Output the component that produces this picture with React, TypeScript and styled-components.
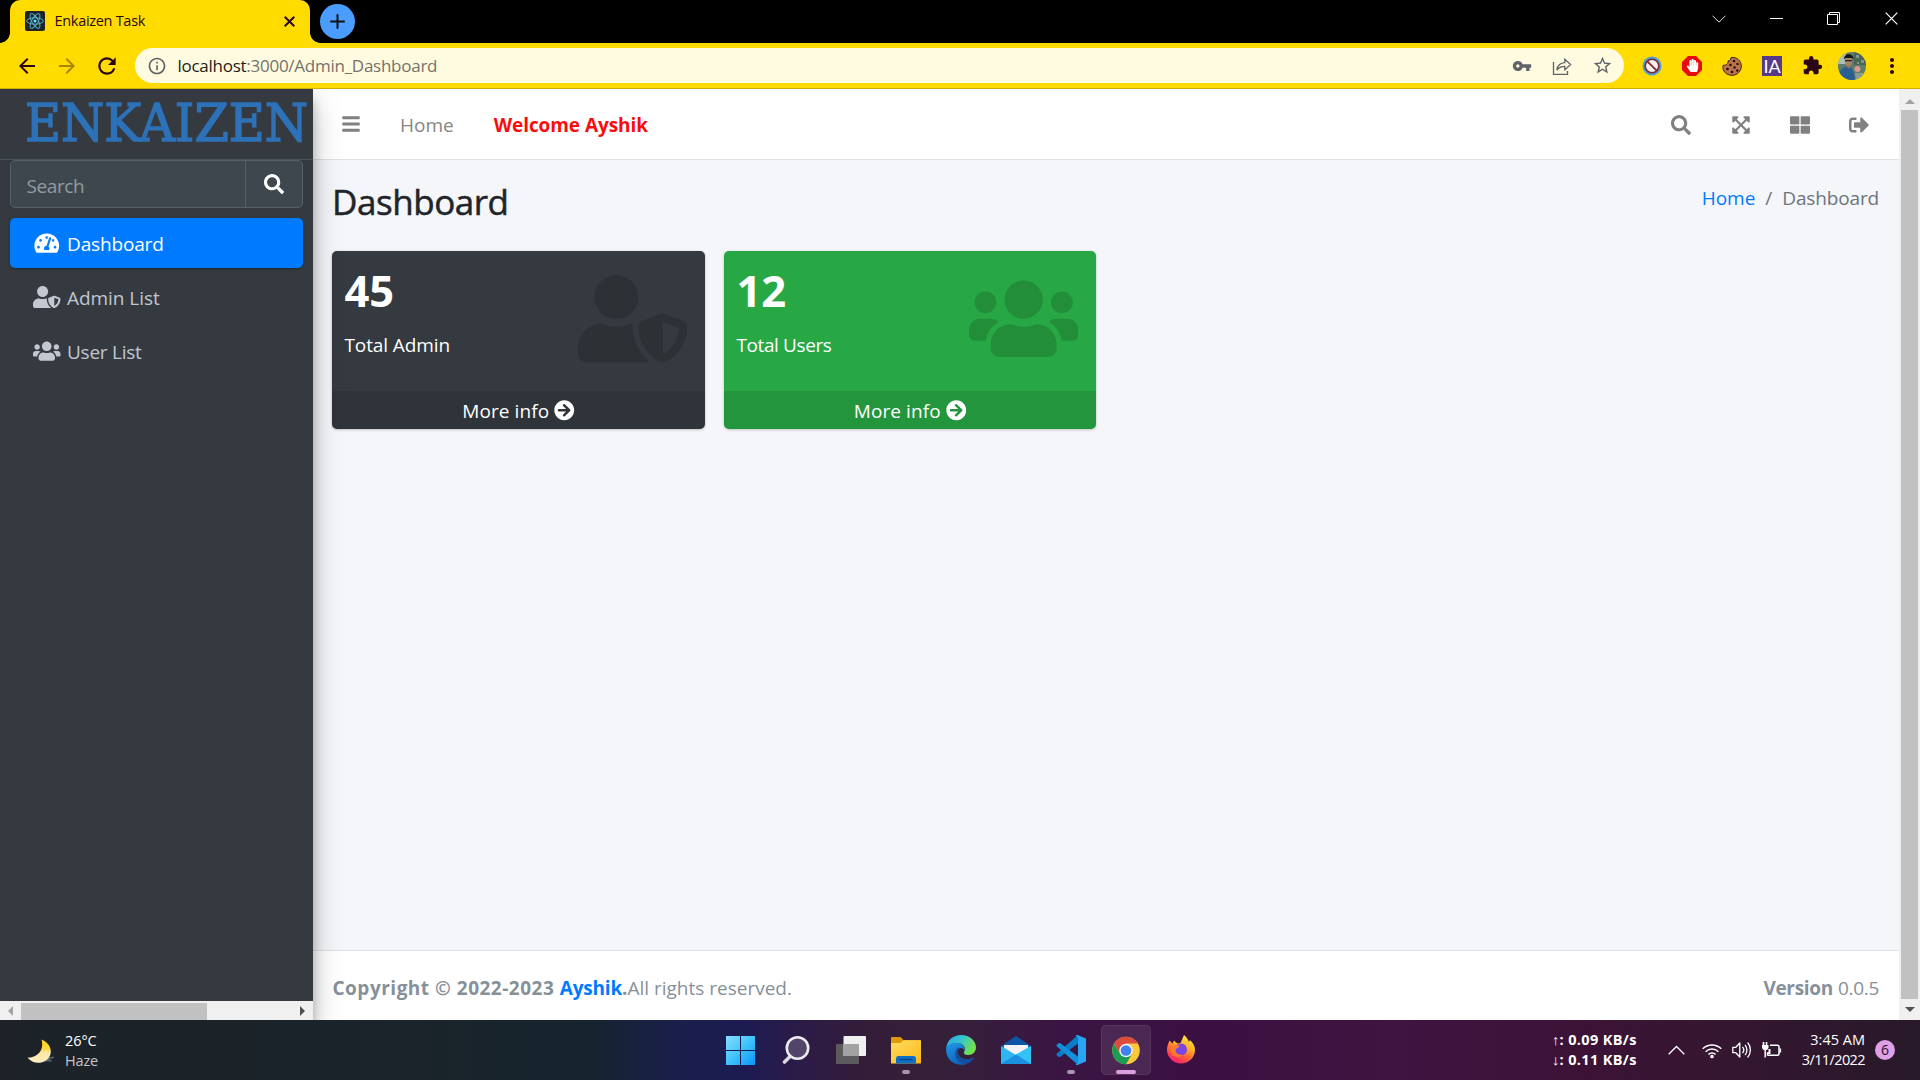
import React from 'react';
import styled, { createGlobalStyle } from 'styled-components';
import {
  FaBars, FaSearch, FaExpandArrowsAlt, FaThLarge, FaSignOutAlt, FaTachometerAlt,
  FaUserShield, FaUsers, FaArrowCircleRight, FaHandPaper,
} from 'react-icons/fa';
import {
  MdArrowBack, MdArrowForward, MdRefresh, MdInfoOutline, MdVpnKey, MdStarBorder,
  MdExtension, MdMoreVert,
} from 'react-icons/md';

const GlobalStyle = createGlobalStyle`
  * { box-sizing: border-box; }
  html, body { margin: 0; padding: 0; overflow: hidden; }
  body {
    font-family: "Open Sans", "Noto Sans", sans-serif;
    font-size: 19px;
    color: #212529;
  }
  svg { display: block; flex: none; }
`;

const Label = styled.span<{ $ls?: number }>`
  letter-spacing: ${p => p.$ls ?? 0}px;
  white-space: pre;
`;

const Screen = styled.div`
  width: 1920px;
  height: 1080px;
  display: flex;
  flex-direction: column;
  overflow: hidden;
`;

/* ---------- browser chrome ---------- */
const TabStrip = styled.div`
  height: 43px;
  background: #000;
  display: flex;
  align-items: flex-start;
  padding-left: 10px;
`;

const Tab = styled.div`
  position: relative;
  width: 300px;
  height: 43px;
  background: #ffdb00;
  border-radius: 10px 10px 0 0;
  display: flex;
  align-items: center;
  padding: 0 15px 1px 15px;
  font-size: 14.5px;
  color: #2b0614;
  &::before, &::after {
    content: "";
    position: absolute;
    bottom: 0;
    width: 10px;
    height: 10px;
  }
  &::before { left: -10px; background: radial-gradient(circle at 0 0, transparent 9.5px, #ffdb00 10px); }
  &::after { right: -10px; background: radial-gradient(circle at 100% 0, transparent 9.5px, #ffdb00 10px); }
`;

const TabTitle = styled(Label)`
  flex: 1;
  margin: -1px 0 0 9.5px;
`;

const NewTab = styled.div`
  width: 35px;
  height: 35px;
  border-radius: 50%;
  background: #4a9dff;
  margin: 4px 0 0 10px;
  display: grid;
  place-items: center;
`;

const WindowControls = styled.div`
  display: flex;
  margin-left: auto;
  height: 37px;
`;

const WindowControl = styled.div`
  width: 57.5px;
  display: grid;
  place-items: center;
`;

const Toolbar = styled.div`
  height: 46px;
  background: #ffdb00;
  border-bottom: 1px solid #cfae05;
  display: flex;
  align-items: center;
  padding: 0 8px 0 7.5px;
  color: #2b0614;
`;

const ToolSlot = styled.div<{ $faded?: boolean }>`
  width: 40px;
  height: 40px;
  display: grid;
  place-items: center;
  opacity: ${p => (p.$faded ? 0.4 : 1)};
`;

const AddressBar = styled.div`
  width: 1490px;
  height: 35px;
  margin: 0 8px 0 7.5px;
  border-radius: 18px;
  background: #fffbe0;
  display: flex;
  align-items: center;
  padding: 0 2px 0 12.5px;
  color: #5f6368;
  font-size: 17px;
`;

const Url = styled(Label)`
  flex: 1;
  margin-left: 10px;
  color: #75716a;
  b { font-weight: 400; color: #1d1b16; }
`;

const IaBadge = styled.span`
  width: 20px;
  height: 20px;
  background: #56398a;
  color: #fff;
  font-family: Lato, sans-serif;
  font-size: 18px;
  line-height: 20px;
  text-align: center;
`;

/* ---------- page ---------- */
const Page = styled.div`
  height: 931px;
  display: flex;
  overflow: hidden;
  background: #f4f6f9;
`;

const Sidebar = styled.aside`
  width: 313px;
  background: #343a40;
  z-index: 2;
  display: flex;
  flex-direction: column;
  box-shadow: 0 14px 28px rgba(0, 0, 0, 0.25), 0 10px 10px rgba(0, 0, 0, 0.22);
`;

const Brand = styled.div`
  height: 71px;
  border-bottom: 1px solid #4b545c;
  padding: 0 0 2px 24.5px;
  display: flex;
  align-items: center;
`;

const BrandName = styled.span`
  font-family: "DejaVu Serif", serif;
  font-size: 52px;
  line-height: 64px;
  color: #2d72b8;
  -webkit-text-stroke: 1.5px #2d72b8;
  white-space: nowrap;
  transform: scaleX(0.95);
  transform-origin: 0 50%;
`;

const SearchBox = styled.div`
  margin: 0 10px;
  height: 48px;
  border: 1px solid #56606a;
  border-radius: 5px;
  background: #3f474e;
  display: flex;
  align-items: stretch;
`;

const SearchInput = styled.div`
  flex: 1;
  display: flex;
  align-items: center;
  padding: 3px 0 0 15.5px;
  color: #939ba2;
`;

const SearchButton = styled.div`
  width: 57px;
  border-left: 1px solid #56606a;
  display: grid;
  place-items: center;
  color: #fff;
`;

const Menu = styled.nav`
  flex: 1;
  display: flex;
  flex-direction: column;
  gap: 4px;
  padding: 10px;
`;

const MenuItem = styled.a<{ $active?: boolean }>`
  height: 50px;
  border-radius: 5px;
  display: flex;
  align-items: center;
  padding-left: 20px;
  color: ${p => (p.$active ? '#fff' : '#c2c7d0')};
  background: ${p => (p.$active ? '#007bff' : 'transparent')};
  box-shadow: ${p => (p.$active ? '0 1px 3px rgba(0,0,0,.12), 0 1px 2px rgba(0,0,0,.24)' : 'none')};
`;

const MenuIcon = styled.span`
  width: 34px;
  margin-right: 3px;
  display: flex;
  justify-content: center;
  svg { width: 27.5px; height: 22px; }
`;

const MenuText = styled(Label)`
  padding-top: 2px;
`;

const HScroll = styled.div`
  height: 19px;
  background: #f0f0f0;
  display: flex;
  align-items: center;
  padding: 0 8px;
`;

const HThumb = styled.div`
  width: 186px;
  height: 17px;
  margin: 2px auto 0 8px;
  background: #c1c1c1;
`;

const Main = styled.main`
  flex: 1;
  display: flex;
  flex-direction: column;
`;

const Navbar = styled.header`
  height: 71px;
  background: #fff;
  border-bottom: 1px solid #dee2e6;
  display: flex;
  align-items: center;
  padding: 0 30px 0 28px;
  color: #808080;
`;

const NavLink = styled(Label)<{ $left: number; $bold?: boolean }>`
  margin: 2px 0 0 ${p => p.$left}px;
  font-weight: ${p => (p.$bold ? 700 : 400)};
  color: ${p => (p.$bold ? '#f80d0d' : '#868686')};
`;

const NavTools = styled.div`
  margin: 1px 0 0 auto;
  display: grid;
  grid-template-columns: repeat(4, 20px);
  justify-items: center;
  align-items: center;
  gap: 39.2px;
`;

const Content = styled.section`
  flex: 1;
  padding: 0 20px 0 19px;
`;

const ContentHeader = styled.div`
  height: 91px;
  display: flex;
  justify-content: space-between;
  align-items: flex-start;
`;

const Title = styled.h1`
  margin: 18px 0 0;
  font-size: 35px;
  line-height: 48px;
  font-weight: 400;
  letter-spacing: -0.45px;
  -webkit-text-stroke: 0.5px #212529;
`;

const Breadcrumb = styled.div`
  margin-top: 23px;
  line-height: 30px;
  display: flex;
  gap: 10px;
  color: #6c757d;
  a { color: #007bff; }
`;

const Cards = styled.div`
  display: grid;
  grid-template-columns: 373px 372px;
  gap: 19px;
`;

const Card = styled.article<{ $bg: string }>`
  height: 178px;
  border-radius: 5px;
  overflow: hidden;
  background: ${p => p.$bg};
  color: #fff;
  display: flex;
  flex-direction: column;
  box-shadow: 0 0 1px rgba(0, 0, 0, 0.125), 0 1px 3px rgba(0, 0, 0, 0.2);
`;

const CardBody = styled.div`
  flex: 1;
  display: flex;
  justify-content: space-between;
  padding: 0 18px 0 12.5px;
`;

const CardIcon = styled.div`
  margin-top: 24px;
  color: rgba(0, 0, 0, 0.15);
  svg { width: 109.4px; height: 87.5px; }
`;

const Count = styled.div`
  margin-top: 15px;
  font-size: 43.5px;
  line-height: 50px;
  font-weight: 700;
`;

const Caption = styled.div`
  margin-top: 14px;
  line-height: 30px;
`;

const CardFooter = styled.div`
  height: 38px;
  background: rgba(0, 0, 0, 0.1);
  display: flex;
  align-items: center;
  justify-content: center;
  gap: 5px;
  padding-top: 1px;
`;

const Footer = styled.footer`
  height: 70px;
  background: #fff;
  border-top: 1px solid #dee2e6;
  display: flex;
  align-items: center;
  padding: 5px 20px 0 19.5px;
  color: #869099;
  b { font-weight: 700; }
  a { color: #007bff; }
`;

const Version = styled.div`
  margin-left: auto;
`;

const VScroll = styled.div`
  width: 21px;
  background: #f0f0f0;
  display: flex;
  flex-direction: column;
  align-items: center;
`;

const VThumb = styled.div`
  width: 17px;
  flex: 1;
  margin: 6px 0 8px;
  background: #c1c1c1;
`;

/* ---------- taskbar ---------- */
const Taskbar = styled.footer`
  height: 60px;
  display: grid;
  grid-template-columns: 713px 495px 1fr;
  color: #fff;
  font-size: 14.5px;
  line-height: 20px;
  background: linear-gradient(90deg, #1c2228 0, #1a242a 420px, #16242f 590px, #1a1f4c 680px,
    #1d1b52 745px, #2b1b47 800px, #341d38 870px, #35203a 950px, #3a1543 1060px, #3a1042 1200px,
    #3e1440 1400px, #3d1238 1560px, #361631 1700px, #28192a 1920px);
`;

const Weather = styled.div`
  display: flex;
  align-items: center;
  padding: 1px 0 0 26px;
  gap: 9px;
`;

const Lines = styled.div<{ $right?: boolean; $bold?: boolean }>`
  display: flex;
  flex-direction: column;
  align-items: ${p => (p.$right ? 'flex-end' : 'flex-start')};
  font-weight: ${p => (p.$bold ? 700 : 400)};
`;

const Dim = styled(Label)`
  color: #c3c7ca;
`;

const Apps = styled.div`
  display: grid;
  grid-template-columns: repeat(9, 55px);
  justify-items: center;
  align-items: center;
`;

const AppTile = styled.div<{ $active?: boolean }>`
  width: 50px;
  height: 50px;
  border-radius: 5px;
  border: 1px solid ${p => (p.$active ? 'rgba(255,255,255,.07)' : 'transparent')};
  background: ${p => (p.$active ? 'rgba(255,255,255,.09)' : 'transparent')};
  display: flex;
  flex-direction: column;
  align-items: center;
  padding-top: 9px;
`;

const Running = styled.span<{ $active?: boolean }>`
  width: ${p => (p.$active ? 20 : 8)}px;
  height: 4px;
  margin-top: 5px;
  border-radius: 2px;
  background: ${p => (p.$active ? '#dc9fe4' : '#a596ab')};
`;

const Tray = styled.div`
  display: flex;
  align-items: center;
  justify-content: flex-end;
  padding-right: 25px;
`;

const TrayIcons = styled.div`
  display: flex;
  align-items: center;
  gap: 10px;
  margin: 0 20px 0 31px;
`;

const ChevronSlot = styled.span`
  margin-right: 7px;
`;

const Badge = styled.span`
  width: 20px;
  height: 20px;
  margin-left: 10px;
  border-radius: 50%;
  background: #dfa0e8;
  color: #26142a;
  font-size: 14px;
  line-height: 20px;
  text-align: center;
`;

/* ---------- drawings ---------- */
const ReactIcon = () => (
  <svg width="20" height="20" viewBox="0 0 20 20">
    <rect width="20" height="20" rx="2" fill="#20232a" />
    <g fill="none" stroke="#61dafb" strokeWidth="0.9" opacity=".85">
      <ellipse cx="10" cy="10" rx="8.3" ry="3.2" />
      <ellipse cx="10" cy="10" rx="8.3" ry="3.2" transform="rotate(60 10 10)" />
      <ellipse cx="10" cy="10" rx="8.3" ry="3.2" transform="rotate(120 10 10)" />
    </g>
    <circle cx="10" cy="10" r="1.6" fill="#61dafb" />
  </svg>
);

const Cross = ({ size, width, color }: { size: number; width: number; color: string }) => (
  <svg width={size} height={size} viewBox={`0 0 ${size} ${size}`} stroke={color} strokeWidth={width}>
    <path d={`M.7.7L${size - 0.7} ${size - 0.7}M${size - 0.7}.7L.7 ${size - 0.7}`} />
  </svg>
);

const Plus = () => (
  <svg width="15" height="15" viewBox="0 0 15 15" stroke="#111" strokeWidth="2" strokeLinecap="round">
    <path d="M7.5 1v13M1 7.5h13" />
  </svg>
);

const ShareIcon = () => (
  <svg width="20" height="20" viewBox="0 0 20 20" fill="none" stroke="#5f6368" strokeWidth="1.3">
    <path d="M1.500 6v12.300h14V15" />
    <path d="M4.800 14.200c.6-4.600 3.200-7.200 8-7.500V3.200L18.600 8.600l-5.800 5.300v-3.500c-3.600 0-6 1-8 3.800z" />
  </svg>
);

const BlockIcon = () => (
  <svg width="20" height="20" viewBox="0 0 20 20">
    <circle cx="10" cy="10" r="9.500" fill="#4a9fdc" />
    <circle cx="10" cy="10" r="6.800" fill="#f3efef" stroke="#84242e" strokeWidth="1.600" />
    <path d="M5.300 5.300l9.400 9.400" stroke="#84242e" strokeWidth="1.800" />
  </svg>
);

const HandIcon = () => (
  <svg width="20" height="20" viewBox="0 0 20 20">
    <path d="M6 0h8l6 6v8l-6 6H6l-6-6V6z" fill="#e90b0b" />
    <g color="#fff"><FaHandPaper x="4" y="3" size={13} /></g>
  </svg>
);

const CookieIcon = () => (
  <svg width="20" height="20" viewBox="0 0 20 20">
    <path d="M9 1.500c0 2.500-1 3.500-3 3.500.3 2.500-1 4-5 4.500C0 15 4.500 19.300 10 19.300s9.300-4.300 9.300-9.300S15 .7 9 1.500z" fill="#bd744b" stroke="#3a211a" strokeWidth="1" />
    <g fill="#1e100c">
      <circle cx="12" cy="5" r="1.300" /><circle cx="8.500" cy="9" r="1.300" /><circle cx="15.500" cy="8" r="1.200" />
      <circle cx="12.500" cy="11.500" r="1.200" /><circle cx="5.500" cy="13" r="1.300" /><circle cx="10" cy="16" r="1.300" /><circle cx="15.300" cy="14.500" r="1.200" />
    </g>
  </svg>
);

const Avatar = () => (
  <svg width="28" height="28" viewBox="0 0 28 28">
    <defs><clipPath id="av"><circle cx="14" cy="14" r="14" /></clipPath></defs>
    <g clipPath="url(#av)">
      <rect width="28" height="28" fill="#5f7d6d" />
      <path d="M0 0h8v12H0z" fill="#a9bfb5" />
      <path d="M16 0h12v13H16z" fill="#4a6455" />
      <path d="M18 3h3v3h-3zM23 8h3v3h-3zM19 10h2v2h-2z" fill="#7e978a" />
      <path d="M1 20c3-4 6-6 9-6s6 4 7 14H0z" fill="#2b5f94" />
      <path d="M8.500 11h4v4l-2 1.500-2-1.500z" fill="#9b7860" />
      <ellipse cx="10.500" cy="9" rx="3.700" ry="4.500" fill="#a98468" />
      <path d="M6 7.500c-.5-7 10-7 9.500 0L14 6H7.500z" fill="#14181c" />
      <path d="M7 8.600h7" stroke="#222" strokeWidth="1.400" />
      <circle cx="19.500" cy="17" r="3" fill="#d99a90" />
      <path d="M17 21h9v7h-8z" fill="#8b9c94" />
    </g>
  </svg>
);

const Arrow = ({ d, color, w, h }: { d: string; color: string; w: number; h: number }) => (
  <svg width={w} height={h} viewBox={`0 0 ${w} ${h}`}><path d={d} fill={color} /></svg>
);

const Moon = () => (
  <svg width="30" height="26" viewBox="0 0 30 26">
    <defs><linearGradient id="mn" x1="0" y1="0" x2="0" y2="1">
      <stop offset="0" stopColor="#ffd21c" /><stop offset=".4" stopColor="#ffd93c" />
      <stop offset=".55" stopColor="#fbe6a0" /><stop offset="1" stopColor="#ffefc4" />
    </linearGradient></defs>
    <path d="M18 20l9-1.500 1.500 1.500-5 1 3 2.500H18z" fill="#59616e" />
    <path d="M15.500 1.500C22 4 26 10 24.500 16c-2.500 10-17 12-23 3.500C9 20 19 14 15.500 1.500z" fill="url(#mn)" />
  </svg>
);

const WindowsIcon = () => (
  <svg width="30" height="30" viewBox="0 0 30 30">
    <defs><linearGradient id="wn" gradientUnits="userSpaceOnUse" x1="0" y1="0" x2="30" y2="30">
      <stop offset="0" stopColor="#8be0ff" /><stop offset=".5" stopColor="#3fc4fb" /><stop offset="1" stopColor="#0a93fa" />
    </linearGradient></defs>
    <path d="M0 1h14v14H0zM15 1h14v14H15zM0 16h14v14H0zM15 16h14v14H15z" fill="url(#wn)" />
  </svg>
);

const TaskSearch = () => (
  <svg width="30" height="30" viewBox="0 0 30 30">
    <path d="M10 20.500L3.500 27" stroke="#d9d9dd" strokeWidth="3.600" strokeLinecap="round" />
    <circle cx="16.500" cy="13" r="10.700" fill="#52446b" stroke="#ececf0" strokeWidth="2.600" />
  </svg>
);

const TaskView = () => (
  <svg width="30" height="30" viewBox="0 0 30 30">
    <rect x="0" y="9" width="23" height="20" rx="1" fill="#5c5a5c" />
    <rect x="7.500" y="1" width="22.500" height="20" rx="1" fill="#f0f0f0" />
    <path d="M7.500 9H22q1 0 1 1v11H7.500z" fill="#a3a2a3" />
  </svg>
);

const FolderIcon = () => (
  <svg width="30" height="30" viewBox="0 0 30 30">
    <defs><linearGradient id="fd" x1="0" y1="0" x2="1" y2="1">
      <stop offset="0" stopColor="#ffdc62" /><stop offset="1" stopColor="#fbb915" />
    </linearGradient></defs>
    <path d="M0 3q0-1 1-1h8.500l3 3H29q1 0 1 1v6H0z" fill="#dd9b0c" />
    <path d="M0 8h9.500l3-2.700H29q1 0 1 1V28.500H0z" fill="url(#fd)" />
    <path d="M5 28.500v-5q0-2.500 2.500-2.500h15q2.500 0 2.500 2.500v5z" fill="#0f6fc4" />
    <path d="M8.500 24.500h13" stroke="#0a4480" strokeWidth="1.200" />
  </svg>
);

const EdgeIcon = () => (
  <svg width="30" height="30" viewBox="0 0 30 30">
    <defs>
      <linearGradient id="eg1" x1="0" y1="0" x2="1" y2=".4">
        <stop offset="0" stopColor="#2aa7e6" /><stop offset=".55" stopColor="#35c6c9" /><stop offset="1" stopColor="#72e04c" />
      </linearGradient>
      <linearGradient id="eg2" x1="0" y1="0" x2=".5" y2="1">
        <stop offset="0" stopColor="#1f9be8" /><stop offset="1" stopColor="#0f62bd" />
      </linearGradient>
    </defs>
    <path d="M.2 13C1.200 5 7.500 0 15 0c9 0 15 6 15 12.500 0 4.500-3.500 7.500-7.500 7.500-3.500 0-5.300-1.300-4.500-3 3-5-2-9-7-9C6 8 2 10.500.2 13z" fill="url(#eg1)" />
    <path d="M.2 13C2 9.500 6 7.700 10 7.700c5.500 0 9.500 3.800 8.500 8.300-.5-2-2-3.200-4-3-5 1-5.500 8-1.500 12 2 2 4.500 3.500 7 4C10 32.500-1 25 .2 13z" fill="url(#eg2)" />
    <path d="M12 12.500c-6 6-1.500 15.500 7.500 16.800 4-1 7.500-4 8.800-7-8 4-16 .5-16.300-4.800-.1-2 .5-3.800 2-4.500z" fill="#134f9e" />
  </svg>
);

const MailIcon = () => (
  <svg width="30" height="30" viewBox="0 0 30 30">
    <path d="M0 11L15 1l15 10v8H0z" fill="#0d56a5" />
    <path d="M3 10h24v9L15 24 3 19z" fill="#f3f3f5" />
    <path d="M0 11l15 9L30 11v18H0z" fill="#2fb5f2" />
    <path d="M0 29l15-9.500L30 11v18z" fill="#35c3f5" />
    <path d="M0 29l15-9.500L30 29z" fill="#1b8fe0" />
  </svg>
);

const CodeIcon = () => (
  <svg width="30" height="30" viewBox="0 0 30 30">
    <path d="M22 0L1 18.500q-1 1 0 2l1.500 1.300q.8.600 1.800 0L22 8.500z" fill="#0a7cc8" />
    <path d="M22 30L1 11.500q-1-1 0-2l1.500-1.300q.8-.600 1.800 0L22 21.500z" fill="#1090dc" />
    <path d="M21.500 0L30 3.500v23L21.500 30q-1.200.3-2-1 2.500 0 2.500-2V3q0-2-2.500-2 .8-1.300 2-1z" fill="#27a5f3" />
  </svg>
);

const ChromeIcon = () => (
  <svg width="28" height="30" viewBox="0 0 28 30">
    <circle cx="14" cy="15.500" r="13.800" fill="#fbc83a" />
    <path d="M2.050 8.600A13.800 13.800 0 0 1 25.950 8.600H14L8.020 18.950z" fill="#dd4a3e" />
    <path d="M2.050 8.600A13.800 13.800 0 0 0 14 29.300L19.980 18.950 8.020 18.950z" fill="#1c9b54" />
    <circle cx="14" cy="15.500" r="6.800" fill="#eef3fb" />
    <circle cx="14" cy="15.500" r="5.300" fill="#3f82f0" />
  </svg>
);

const FirefoxIcon = () => (
  <svg width="30" height="30" viewBox="0 0 30 30">
    <defs><linearGradient id="ff" x1=".8" y1="0" x2=".3" y2="1">
      <stop offset="0" stopColor="#fff04a" /><stop offset=".4" stopColor="#ffab25" />
      <stop offset=".7" stopColor="#ff5a3a" /><stop offset="1" stopColor="#f5197f" />
    </linearGradient></defs>
    <path d="M3.500 5.500l3 3L8 5.500l3.500 3 3-.5L18 0c3 2 4 5 5 7l1-2c3 3 5.200 6 5 10.500C28.500 23 22.500 28.500 15 28.500S1 22.500 1 15c0-3.500 1-6 2.500-9.500z" fill="url(#ff)" />
    <circle cx="15" cy="14.500" r="6" fill="#7a45e0" />
    <path d="M4 12c4-3 7-1.500 10-1.500-1 2.500-4 2.500-4.500 4.500-.3 3 3 5.500 7 4.500-3 4-10 3-12-3z" fill="#ff7a2a" />
  </svg>
);

const ChevronUp = () => (
  <svg width="17" height="10" viewBox="0 0 17 10" fill="none" stroke="#fff" strokeWidth="1.300"><path d="M.7 9.200l7.800-7.700 7.800 7.700" /></svg>
);

const WifiIcon = () => (
  <svg width="20" height="17" viewBox="0 0 20 17" fill="none" stroke="#fff" strokeWidth="1.400">
    <path d="M.7 6.800a13.200 13.200 0 0 1 18.600 0M3.600 9.700a9 9 0 0 1 12.800 0M6.400 12.500a5.100 5.100 0 0 1 7.200 0" />
    <circle cx="10" cy="14.600" r="1.800" fill="#fff" stroke="none" />
  </svg>
);

const VolumeIcon = () => (
  <svg width="20" height="18" viewBox="0 0 20 18" fill="none" stroke="#fff" strokeWidth="1.300" strokeLinejoin="round">
    <path d="M.8 6.300h3l4-4.300v14l-4-4.300h-3z" />
    <path d="M10.500 6a4.500 4.500 0 0 1 0 6M13 3.800a8 8 0 0 1 0 10.400M15.600 1.500a11.500 11.500 0 0 1 0 15" />
  </svg>
);

const BatteryIcon = () => (
  <svg width="20" height="16" viewBox="0 0 20 16" fill="none" stroke="#fff" strokeWidth="1.500">
    <path d="M8 3.200h7.500q1.500 0 1.500 1.500v7q0 1.500-1.500 1.500H5.500M5.500 13.500v-3" />
    <path d="M18.300 6.500v4M1.500 0v3M4.500 0v3" strokeWidth="1.600" />
    <path d="M0 3h6.500v3L5 8H1.500L0 6z" fill="#fff" stroke="none" />
    <path d="M3.200 7v8.500" />
    <path d="M7.500 7v4h-2" strokeWidth="2" />
  </svg>
);

const apps = [
  { icon: <WindowsIcon /> },
  { icon: <TaskSearch /> },
  { icon: <TaskView /> },
  { icon: <FolderIcon />, running: true },
  { icon: <EdgeIcon /> },
  { icon: <MailIcon /> },
  { icon: <CodeIcon />, running: true },
  { icon: <ChromeIcon />, running: true, active: true },
  { icon: <FirefoxIcon /> },
];

const menu = [
  { icon: <FaTachometerAlt />, text: 'Dashboard', ls: -0.15, active: true },
  { icon: <FaUserShield />, text: 'Admin List', ls: -0.05 },
  { icon: <FaUsers />, text: 'User List', ls: -0.25 },
];

const cards = [
  { bg: '#343a40', count: '45', text: 'Total Admin', ls: -0.1, icon: <FaUserShield /> },
  { bg: '#28a745', count: '12', text: 'Total Users', ls: -0.4, icon: <FaUsers /> },
];

export default function App() {
  return (
    <Screen>
      <GlobalStyle />
      <TabStrip>
        <Tab>
          <ReactIcon />
          <TabTitle $ls={-0.3}>Enkaizen Task</TabTitle>
          <Cross size={11} width={2} color="#2b0614" />
        </Tab>
        <NewTab><Plus /></NewTab>
        <WindowControls>
          <WindowControl>
            <svg width="14" height="8" viewBox="0 0 14 8" fill="none" stroke="#ddd"><path d="M.5.700l6.500 6.500 6.500-6.500" /></svg>
          </WindowControl>
          <WindowControl>
            <svg width="13" height="1" viewBox="0 0 13 1"><rect width="13" height="1" fill="#fff" /></svg>
          </WindowControl>
          <WindowControl>
            <svg width="13" height="13" viewBox="0 0 13 13" fill="none" stroke="#fff"><path d="M.5 2.500h10v10H.5zM2.500 2V.5h10v10H11" /></svg>
          </WindowControl>
          <WindowControl><Cross size={13} width={1.2} color="#fff" /></WindowControl>
        </WindowControls>
      </TabStrip>
      <Toolbar>
        <ToolSlot><MdArrowBack size={24} /></ToolSlot>
        <ToolSlot $faded><MdArrowForward size={24} /></ToolSlot>
        <ToolSlot><MdRefresh size={26} /></ToolSlot>
        <AddressBar>
          <MdInfoOutline size={20} />
          <Url $ls={-0.26}><b>localhost</b>:3000/Admin_Dashboard</Url>
          <ToolSlot><MdVpnKey size={20} /></ToolSlot>
          <ToolSlot><ShareIcon /></ToolSlot>
          <ToolSlot><MdStarBorder size={21} /></ToolSlot>
        </AddressBar>
        <ToolSlot><BlockIcon /></ToolSlot>
        <ToolSlot><HandIcon /></ToolSlot>
        <ToolSlot><CookieIcon /></ToolSlot>
        <ToolSlot><IaBadge>IA</IaBadge></ToolSlot>
        <ToolSlot><MdExtension size={21} /></ToolSlot>
        <ToolSlot><Avatar /></ToolSlot>
        <ToolSlot><MdMoreVert size={24} /></ToolSlot>
      </Toolbar>

      <Page>
        <Sidebar>
          <Brand><BrandName>ENKAIZEN</BrandName></Brand>
          <SearchBox>
            <SearchInput><Label $ls={-0.4}>Search</Label></SearchInput>
            <SearchButton><FaSearch size={20} /></SearchButton>
          </SearchBox>
          <Menu>
            {menu.map(m => (
              <MenuItem key={m.text} $active={m.active}>
                <MenuIcon>{m.icon}</MenuIcon>
                <MenuText $ls={m.ls}>{m.text}</MenuText>
              </MenuItem>
            ))}
          </Menu>
          <HScroll>
            <Arrow w={5} h={10} d="M5 0v10L0 5z" color="#a3a3a3" />
            <HThumb />
            <Arrow w={5} h={10} d="M0 0v10l5-5z" color="#505050" />
          </HScroll>
        </Sidebar>

        <Main>
          <Navbar>
            <FaBars size={20} />
            <NavLink $left={39} $ls={0}>Home</NavLink>
            <NavLink $left={40} $ls={-0.07} $bold>Welcome Ayshik</NavLink>
            <NavTools>
              <FaSearch size={20} />
              <FaExpandArrowsAlt size={20} />
              <FaThLarge size={20} />
              <FaSignOutAlt size={20} />
            </NavTools>
          </Navbar>
          <Content>
            <ContentHeader>
              <Title>Dashboard</Title>
              <Breadcrumb>
                <a>Home</a><span>/</span><Label $ls={-0.15}>Dashboard</Label>
              </Breadcrumb>
            </ContentHeader>
            <Cards>
              {cards.map(c => (
                <Card key={c.text} $bg={c.bg}>
                  <CardBody>
                    <div>
                      <Count>{c.count}</Count>
                      <Caption><Label $ls={c.ls}>{c.text}</Label></Caption>
                    </div>
                    <CardIcon>{c.icon}</CardIcon>
                  </CardBody>
                  <CardFooter>
                    <Label $ls={0.1}>More info</Label>
                    <FaArrowCircleRight size={20.5} />
                  </CardFooter>
                </Card>
              ))}
            </Cards>
          </Content>
          <Footer>
            <b><Label $ls={0.5}>Copyright © 2022-2023 </Label><a><Label $ls={-0.2}>Ayshik</Label></a>.</b>
            <Label $ls={0}>All rights reserved.</Label>
            <Version><b><Label $ls={-0.3}>Version</Label></b> <Label $ls={-0.3}>0.0.5</Label></Version>
          </Footer>
        </Main>

        <VScroll>
          <Arrow w={10} h={15} d="M0 15h10l-5-5z" color="#a3a3a3" />
          <VThumb />
          <Arrow w={10} h={13} d="M0 0h10l-5 5z" color="#505050" />
        </VScroll>
      </Page>

      <Taskbar>
        <Weather>
          <Moon />
          <Lines>
            <Label $ls={-0.1}>26°C</Label>
            <Dim $ls={-0.18}>Haze</Dim>
          </Lines>
        </Weather>
        <Apps>
          {apps.map((a, i) => (
            <AppTile key={i} $active={a.active}>
              {a.icon}
              {a.running && <Running $active={a.active} />}
            </AppTile>
          ))}
        </Apps>
        <Tray>
          <Lines $bold>
            <Label $ls={0.35}>↑: 0.09 KB/s</Label>
            <Label $ls={0.35}>↓: 0.11 KB/s</Label>
          </Lines>
          <TrayIcons>
            <ChevronSlot><ChevronUp /></ChevronSlot>
            <WifiIcon />
            <VolumeIcon />
            <BatteryIcon />
          </TrayIcons>
          <Lines $right>
            <Label>3:45 AM</Label>
            <Label $ls={-0.6}>3/11/2022</Label>
          </Lines>
          <Badge>6</Badge>
        </Tray>
      </Taskbar>
    </Screen>
  );
}
